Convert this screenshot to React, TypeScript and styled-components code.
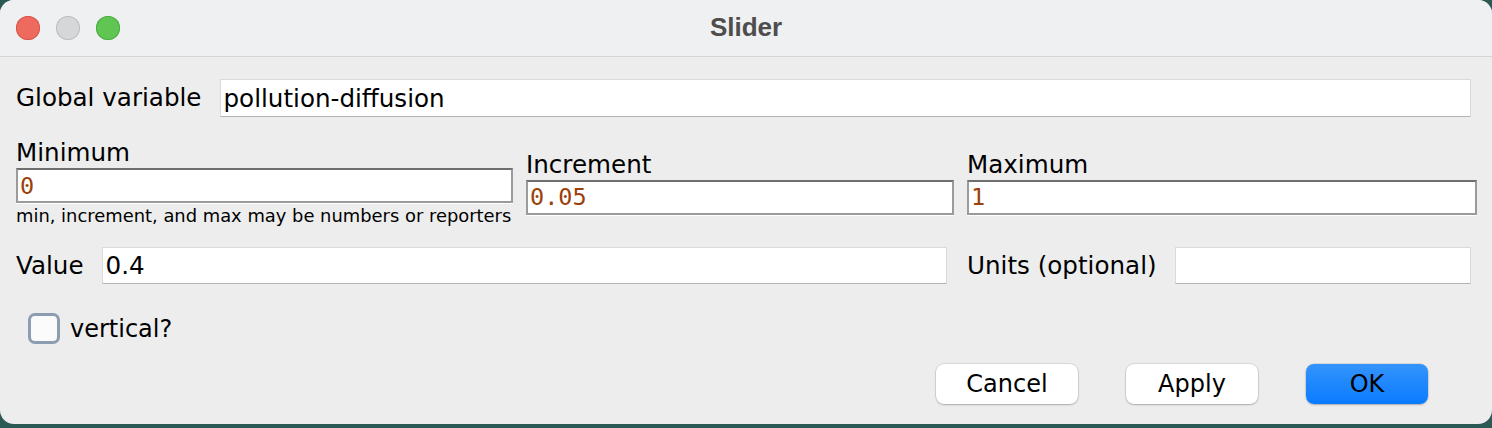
import React from 'react'
import styled, { createGlobalStyle } from 'styled-components'

const GlobalStyle = createGlobalStyle`
  html, body {
    margin: 0;
    padding: 0;
    background: #2b5a55;
  }
  body {
    font-family: "DejaVu Sans", "Liberation Sans", sans-serif;
  }
`

const SliderDialog: React.FC = () => {
  return (
    <>
      <GlobalStyle />
      <Window>
        <TitleBar>
          <Lights>
            <Light $fill="#ee6a5f" $ring="#d8574c" />
            <Light $fill="#d5d7d9" $ring="#bcbec0" />
            <Light $fill="#61c554" $ring="#4dad42" />
          </Lights>
          <Title>Slider</Title>
          <span />
        </TitleBar>

        <Body>
          <FieldRow>
            <Label>Global variable</Label>
            <TextField $height={38} readOnly value="pollution-diffusion" />
          </FieldRow>

          <RangeGrid>
            <Column>
              <Label>Minimum</Label>
              <CodeField readOnly value="0" />
              <Hint>min, increment, and max may be numbers or reporters</Hint>
            </Column>
            <Column>
              <Label>Increment</Label>
              <CodeField readOnly value="0.05" />
            </Column>
            <Column>
              <Label>Maximum</Label>
              <CodeField readOnly value="1" />
            </Column>
          </RangeGrid>

          <FieldRow $gapTop={21}>
            <ValueGroup>
              <Label>Value</Label>
              <TextField $height={37} readOnly value="0.4" />
            </ValueGroup>
            <UnitsGroup>
              <Label>Units (optional)</Label>
              <TextField $height={37} readOnly value="" />
            </UnitsGroup>
          </FieldRow>

          <CheckRow>
            <CheckBox />
            <CheckLabel>vertical?</CheckLabel>
          </CheckRow>

          <ButtonBar>
            <Button $width={142}>Cancel</Button>
            <Button $width={132}>Apply</Button>
            <Button $width={122} $primary>OK</Button>
          </ButtonBar>
        </Body>
      </Window>
    </>
  )
}

// Styled components
const Window = styled.div`
  width: 1492px;
  height: 424px;
  background: #ededed;
  border-radius: 14px;
  overflow: hidden;
  display: flex;
  flex-direction: column;
`

const TitleBar = styled.div`
  height: 56px;
  flex-shrink: 0;
  display: grid;
  grid-template-columns: 1fr auto 1fr;
  align-items: center;
  padding: 0 16px;
  background: #eef0f1;
  border-bottom: 1px solid #d4d5d6;
`

const Lights = styled.div`
  display: flex;
  gap: 16px;
  margin-top: -1px;
`

const Light = styled.span<{ $fill: string; $ring: string }>`
  width: 24px;
  height: 24px;
  border-radius: 50%;
  background: ${(p) => p.$fill};
  box-shadow: inset 0 0 0 1px ${(p) => p.$ring};
`

const Title = styled.div`
  font-family: "Liberation Sans", Arial, sans-serif;
  font-weight: bold;
  font-size: 26px;
  color: #4d4d4d;
  margin-top: -2px;
`

const Body = styled.div`
  display: flex;
  flex-direction: column;
  padding: 22px 15px 0 16px;
`

const FieldRow = styled.div<{ $gapTop?: number }>`
  display: flex;
  align-items: center;
  gap: 18px;
  margin-right: 6px;
  margin-top: ${(p) => p.$gapTop ?? 0}px;
`

const Label = styled.span`
  font-size: 24.6px;
  line-height: 30px;
  color: #000;
  white-space: nowrap;
`

const TextField = styled.input<{ $height: number }>`
  flex: 1;
  min-width: 0;
  width: 0;
  height: ${(p) => p.$height}px;
  box-sizing: border-box;
  margin: 0;
  padding: 0 3px;
  border: 1px solid #dadada;
  border-bottom-color: #b4b4b4;
  background: #fff;
  font-family: "DejaVu Sans", sans-serif;
  font-size: 24.6px;
  color: #000;
  outline: none;
`

const RangeGrid = styled.div`
  display: grid;
  grid-template-columns: 497px 428px 510px;
  column-gap: 13px;
  align-items: center;
  margin-top: 21px;
`

const Column = styled.div`
  display: flex;
  flex-direction: column;
`

const CodeField = styled.input`
  height: 35px;
  box-sizing: border-box;
  margin: 0;
  padding: 0 2px;
  border: 2px solid #9b9b9b;
  border-top-color: #6f6f6f;
  background: #fff;
  box-shadow: 0 1px 0 #fff;
  font-family: "DejaVu Sans Mono", "Liberation Mono", monospace;
  font-size: 23.5px;
  color: #9c3f0a;
  outline: none;
`

const Hint = styled.span`
  margin-top: 3px;
  font-size: 17.9px;
  line-height: 20px;
  color: #000;
  white-space: nowrap;
`

const ValueGroup = styled.div`
  width: 931px;
  flex-shrink: 0;
  display: flex;
  align-items: center;
  gap: 18px;
`

const UnitsGroup = styled.div`
  flex: 1;
  display: flex;
  align-items: center;
  gap: 18px;
  margin-left: 2px;
`

const CheckRow = styled.div`
  display: flex;
  align-items: center;
  gap: 10px;
  margin-top: 29px;
  padding-left: 12px;
  height: 31px;
`

const CheckBox = styled.span`
  width: 32px;
  height: 31px;
  box-sizing: border-box;
  border: 3px solid #8c9cb1;
  border-radius: 7px;
  background: #fbfbfb;
`

const CheckLabel = styled.span`
  font-size: 24px;
  line-height: 30px;
  color: #000;
`

const ButtonBar = styled.div`
  display: flex;
  justify-content: flex-end;
  gap: 48px;
  margin-top: 20px;
  padding-right: 49px;
`

const Button = styled.button<{ $width: number; $primary?: boolean }>`
  width: ${(p) => p.$width}px;
  height: 40px;
  border: none;
  border-radius: 8px;
  padding: 0;
  background: ${(p) =>
    p.$primary ? 'linear-gradient(#3494fb, #0a7bff)' : '#fff'};
  box-shadow: 0 0 0 0.5px rgba(0, 0, 0, 0.16), 0 1px 2px rgba(0, 0, 0, 0.22);
  font-family: "DejaVu Sans", sans-serif;
  font-size: 24px;
  color: #000;
  cursor: pointer;
`

export default SliderDialog
